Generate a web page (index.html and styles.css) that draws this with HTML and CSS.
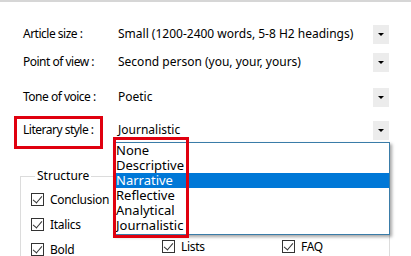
FILE: index.html
```html
<!DOCTYPE html>
<html lang="en">
<head>
  <title>Article settings</title>
  <link rel="stylesheet" href="styles.css">
</head>
<body>

  <div class="top-rule"></div>

  <div class="settings">
    <div class="row row-size">
      <span class="label">Article size :</span>
      <span class="value">Small (1200-2400 words, 5-8 H2 headings)</span>
      <span class="drop"></span>
    </div>
    <div class="row row-view">
      <span class="label">Point of view :</span>
      <span class="value">Second person (you, your, yours)</span>
      <span class="drop"></span>
    </div>
    <div class="row row-tone">
      <span class="label">Tone of voice :</span>
      <span class="value">Poetic</span>
      <span class="drop"></span>
    </div>
    <div class="row row-style">
      <span class="label marked">Literary style :</span>
      <span class="value">Journalistic</span>
      <span class="drop"></span>

      <!-- open dropdown -->
      <ul class="options">
        <li>None</li>
        <li>Descriptive</li>
        <li class="selected">Narrative</li>
        <li>Reflective</li>
        <li>Analytical</li>
        <li>Journalistic</li>
      </ul>
      <div class="options-mark"></div>
    </div>
  </div>

  <fieldset class="group">
    <legend>Structure</legend>
    <div class="checks">
      <label class="check"><span class="box"></span>Conclusion</label>
      <span></span>
      <span></span>
      <label class="check"><span class="box"></span>Italics</label>
      <span></span>
      <span></span>
      <label class="check"><span class="box"></span>Bold</label>
      <label class="check up"><span class="box"></span>Lists</label>
      <label class="check up"><span class="box"></span>FAQ</label>
    </div>
  </fieldset>

</body>
</html>
```

FILE: styles.css
```css
:root {
  --text: #000;
  --mark: #e0000f;
  --select: #0078d7;
  --drop-bg: #ececec;
  --frame: #dcdcdc;
}

* {
  box-sizing: border-box;
}

body {
  margin: 0;
  width: 411px;
  height: 256px;
  overflow: hidden;
  background: #fff;
  color: var(--text);
  font-family: "Noto Sans", "Open Sans", sans-serif;
  font-size: 12px;
}

.top-rule {
  height: 2px;
  background: #d6d6d6;
}

.settings {
  padding: 22px 0 0 23px;
}

.row {
  position: relative;
  display: grid;
  grid-template-columns: 95px 255px 16px;
  align-items: center;
  height: 20px;
}

.row-view { margin-top: 8px; }
.row-tone { margin-top: 15px; }
.row-style { margin-top: 13px; }

.label,
.value {
  white-space: nowrap;
  line-height: 20px;
}

.label {
  letter-spacing: -0.5px;
}

.drop {
  height: 19px;
  background: var(--drop-bg);
  position: relative;
}

.drop::after {
  content: "";
  position: absolute;
  left: 5px;
  top: 8px;
  border-left: 3px solid transparent;
  border-right: 3px solid transparent;
  border-top: 3px solid #000;
}

.label.marked {
  position: relative;
}

.label.marked::before {
  content: "";
  position: absolute;
  left: -9px;
  top: -4px;
  width: 83px;
  height: 27px;
  border: 3px solid var(--mark);
}

.options {
  position: absolute;
  left: 90px;
  top: 22px;
  width: 277px;
  height: 93px;
  margin: 0;
  padding: 0;
  list-style: none;
  background: #fff;
  border: 1px solid #3a7ca8;
  box-shadow: 2px 2px 3px rgba(0, 0, 0, 0.35);
  font-size: 13px;
  z-index: 2;
}

.options li {
  height: 15px;
  line-height: 15px;
  padding-left: 2px;
}

.options li.selected {
  background: var(--select);
  color: #fff;
}

.options-mark {
  position: absolute;
  left: 90px;
  top: 17px;
  width: 76px;
  height: 101px;
  border: 3px solid var(--mark);
  z-index: 3;
}

.group {
  margin: 28px 21px 0 20px;
  padding: 3px 0 0 10px;
  border: 1px solid var(--frame);
  height: 100px;
}

.group legend {
  padding: 0 2px;
  margin-left: 4px;
  line-height: 16px;
}

.checks {
  display: grid;
  grid-template-columns: 131px 120px 1fr;
  grid-auto-rows: 25px;
}

.check {
  display: flex;
  align-items: center;
  gap: 6px;
  white-space: nowrap;
  letter-spacing: -0.3px;
}

.check.up {
  margin-top: -6px;
}

.check .box {
  width: 13px;
  height: 13px;
  border: 1px solid #333;
  position: relative;
}

.check .box::after {
  content: "";
  position: absolute;
  left: 3px;
  top: 0px;
  width: 4px;
  height: 8px;
  border-right: 1px solid #333;
  border-bottom: 1px solid #333;
  transform: rotate(40deg);
}
```
